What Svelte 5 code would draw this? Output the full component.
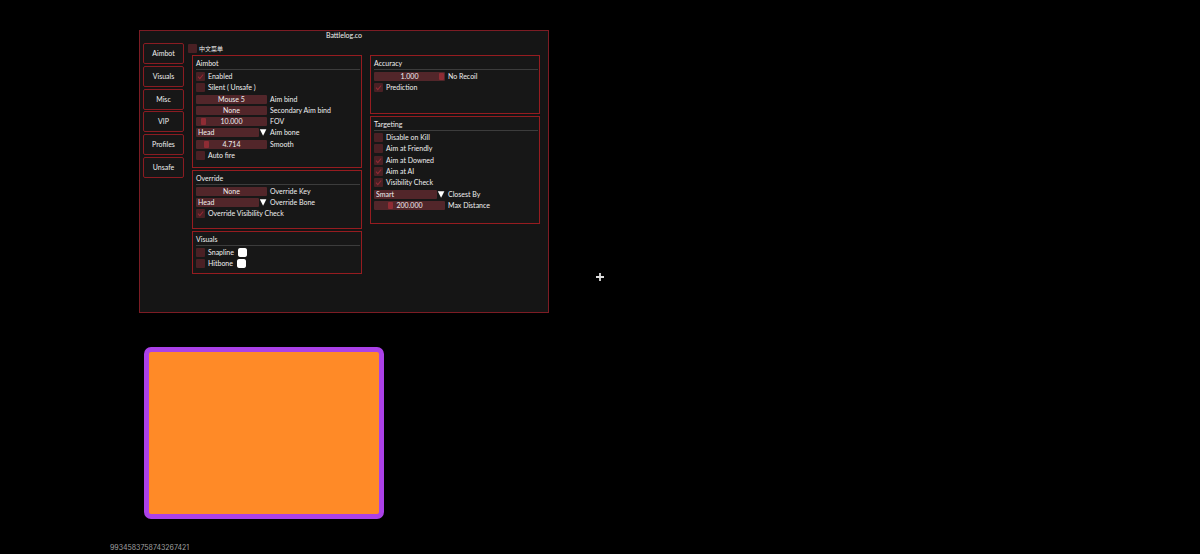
<script>
  const tabs = ['Aimbot', 'Visuals', 'Misc', 'VIP', 'Profiles', 'Unsafe'];
  const bones = ['Head', 'Neck', 'Chest', 'Pelvis'];

  let chinese = false;

  let columns = [
    [
      {
        title: 'Aimbot', size: 'large', rows: [
          { type: 'check', label: 'Enabled', value: true },
          { type: 'check', label: 'Silent ( Unsafe )', value: false },
          { type: 'bind', label: 'Aim bind', value: 'Mouse 5' },
          { type: 'bind', label: 'Secondary Aim bind', value: 'None' },
          { type: 'slider', label: 'FOV', value: 10, min: 0, max: 180 },
          { type: 'combo', label: 'Aim bone', value: 'Head', options: bones },
          { type: 'slider', label: 'Smooth', value: 4.714, min: 1, max: 36 },
          { type: 'check', label: 'Auto fire', value: false }
        ]
      },
      {
        title: 'Override', size: 'small', rows: [
          { type: 'bind', label: 'Override Key', value: 'None' },
          { type: 'combo', label: 'Override Bone', value: 'Head', options: bones },
          { type: 'check', label: 'Override Visibility Check', value: true }
        ]
      },
      {
        title: 'Visuals', size: 'tiny', rows: [
          { type: 'check', label: 'Snapline', value: false, color: '#ffffff' },
          { type: 'check', label: 'Hitbone', value: false, color: '#ffffff' }
        ]
      }
    ],
    [
      {
        title: 'Accuracy', size: 'small', rows: [
          { type: 'slider', label: 'No Recoil', value: 1, min: 0, max: 1 },
          { type: 'check', label: 'Prediction', value: true }
        ]
      },
      {
        title: 'Targeting', size: 'medium', rows: [
          { type: 'check', label: 'Disable on Kill', value: false },
          { type: 'check', label: 'Aim at Friendly', value: false },
          { type: 'check', label: 'Aim at Downed', value: true },
          { type: 'check', label: 'Aim at AI', value: true },
          { type: 'check', label: 'Visibility Check', value: true },
          { type: 'combo', label: 'Closest By', value: 'Smart', options: ['Smart', 'Distance', 'Crosshair'] },
          { type: 'slider', label: 'Max Distance', value: 200, min: 0, max: 1000 }
        ]
      }
    ]
  ];
</script>

<div class="screen">
  <main class="menu">
    <h1>Battlelog.co</h1>

    <div class="body">
      <nav>
        {#each tabs as tab}
          <button class="tab">{tab}</button>
        {/each}
      </nav>

      <div class="content">
        <label class="row lang">
          <input type="checkbox" bind:checked={chinese} />
          <span lang="zh">中文菜单</span>
        </label>

        <div class="columns">
          {#each columns as groups}
            <div class="column">
              {#each groups as group}
                <section class="group {group.size}">
                  <h2>{group.title}</h2>
                  <div class="rows">
                    {#each group.rows as row}
                      {#if row.type === 'check'}
                        <div class="row">
                          <label class="row">
                            <input type="checkbox" bind:checked={row.value} />
                            {row.label}
                          </label>
                          {#if row.color}
                            <input class="swatch" type="color" bind:value={row.color} aria-label="{row.label} color" />
                          {/if}
                        </div>
                      {:else}
                        <label class="row">
                          {#if row.type === 'bind'}
                            <button class="field">{row.value}</button>
                          {:else if row.type === 'slider'}
                            <span class="slider">
                              <input class="field" type="range" min={row.min} max={row.max} step="0.001" bind:value={row.value} />
                              <span class="value">{row.value.toFixed(3)}</span>
                            </span>
                          {:else}
                            <span class="combo">
                              <select class="field" bind:value={row.value}>
                                {#each row.options as option}
                                  <option>{option}</option>
                                {/each}
                              </select>
                              <svg viewBox="0 0 9 9"><path d="M1.8 1.2h6.6L5.1 7.8z" fill="#fff" /></svg>
                            </span>
                          {/if}
                          {row.label}
                        </label>
                      {/if}
                    {/each}
                  </div>
                </section>
              {/each}
            </div>
          {/each}
        </div>
      </div>
    </div>
  </main>
</div>

<div class="radar-area">
  <div class="radar"></div>
</div>

<p class="serial">9934583758743267421</p>

<!-- Crosshair -->
<svg class="crosshair" viewBox="0 0 9 9">
  <path d="M4.5 0.5v8M0.5 4.5h8" stroke="#ddd" stroke-width="1.8" />
</svg>

<style>
  :global(body) {
    background: #000;
  }

  .screen {
    display: grid;
    grid-template-columns: 139fr 410fr 651fr;
    padding-top: 30px;
    color: #f0f0f0;
    font: 7px/9px Lato, 'Noto Sans CJK SC', sans-serif;
  }

  .menu {
    grid-column: 2;
    min-height: 283px;
    box-sizing: border-box;
    background: #151515;
    border: 1px solid #7c1c24;
  }

  h1 {
    margin: 0;
    font-size: 7px;
    font-weight: 400;
    line-height: 9px;
    text-align: center;
  }

  .body {
    display: flex;
    gap: 4px;
    padding: 3px 8px 0 3px;
  }

  nav {
    display: flex;
    flex-direction: column;
    justify-content: space-between;
    width: 41px;
    height: 135px;
    flex-shrink: 0;
  }

  button, select, input {
    margin: 0;
    padding: 0;
    border: 0;
    border-radius: 1px;
    box-sizing: border-box;
    color: inherit;
    font: inherit;
    appearance: none;
  }

  .tab {
    height: 21px;
    background: #171717;
    border: 1px solid #8a1c22;
    border-radius: 2px;
  }

  .content {
    flex: 1;
    min-width: 0;
  }

  .row {
    display: flex;
    align-items: center;
    gap: 3px;
    height: 9px;
    white-space: nowrap;
  }

  .lang {
    gap: 2px;
    padding-top: 1px;
  }

  .lang span {
    font-size: 6px;
  }

  .columns {
    display: flex;
    gap: 8px;
    padding: 2px 0 0 4px;
  }

  .column {
    display: flex;
    flex-direction: column;
    flex: 1;
    gap: 2px;
    min-width: 0;
  }

  .group {
    box-sizing: border-box;
    padding: 3px 1px 0 3px;
    background: #171717;
    border: 1px solid #961c20;
  }

  .large { min-height: 113px; }
  .medium { min-height: 108px; }
  .small { min-height: 59px; }
  .tiny { min-height: 43px; }

  h2 {
    margin: 0 0 2px;
    padding-bottom: 1px;
    border-bottom: 1px solid #3c3c3c;
    font-size: 7px;
    font-weight: 400;
    line-height: 9px;
  }

  .rows {
    display: flex;
    flex-direction: column;
    justify-content: space-between;
  }

  .large .rows { height: 88px; }
  .medium .rows { height: 77px; }
  .small .rows, .tiny .rows { gap: 2px; }

  input[type='checkbox'] {
    width: 9px;
    height: 9px;
    background: #4a2024;
  }

  input[type='checkbox']:checked {
    background: #4a2024 url("data:image/svg+xml,%3Csvg xmlns='http://www.w3.org/2000/svg' viewBox='0 0 9 9'%3E%3Cpath d='M2 4.7l1.8 1.9L7.2 2.5' fill='none' stroke='%238f2a34' stroke-width='1.1'/%3E%3C/svg%3E");
  }

  .field {
    width: 71px;
    height: 9px;
    background: #52262a;
  }

  .slider, .combo {
    display: grid;
    grid-template-columns: 71px;
  }

  .slider > *, .combo > * {
    grid-area: 1 / 1;
  }

  .slider .field {
    padding: 0 1px;
  }

  .slider .value {
    text-align: center;
    pointer-events: none;
  }

  .field::-webkit-slider-thumb {
    appearance: none;
    width: 5px;
    height: 7px;
    background: #8f2c34;
    border-radius: 1px;
  }

  .combo .field {
    width: 63px;
    padding-left: 2px;
  }

  .combo svg {
    justify-self: end;
    width: 9px;
    height: 9px;
    pointer-events: none;
  }

  .swatch {
    width: 9px;
    height: 9px;
    margin-left: 1px;
    background: none;
  }

  .swatch::-webkit-color-swatch-wrapper {
    padding: 0;
  }

  .swatch::-webkit-color-swatch {
    border: 0;
    border-radius: 2px;
  }

  .radar-area {
    display: grid;
    grid-template-columns: 144fr 240fr 816fr;
    padding-top: 34px;
  }

  .radar {
    grid-column: 2;
    aspect-ratio: 240 / 172;
    box-sizing: border-box;
    background: #ff8a27;
    border: 5px solid #ab41e8;
    border-radius: 7px;
  }

  .serial {
    margin: 24px 0 0 110px;
    color: #a0a0a0;
    font: 7px/10px Inter, sans-serif;
  }

  .crosshair {
    position: fixed;
    top: 50%;
    left: 50%;
    width: 9px;
    height: 9px;
    transform: translate(-50%, -50%);
  }
</style>
